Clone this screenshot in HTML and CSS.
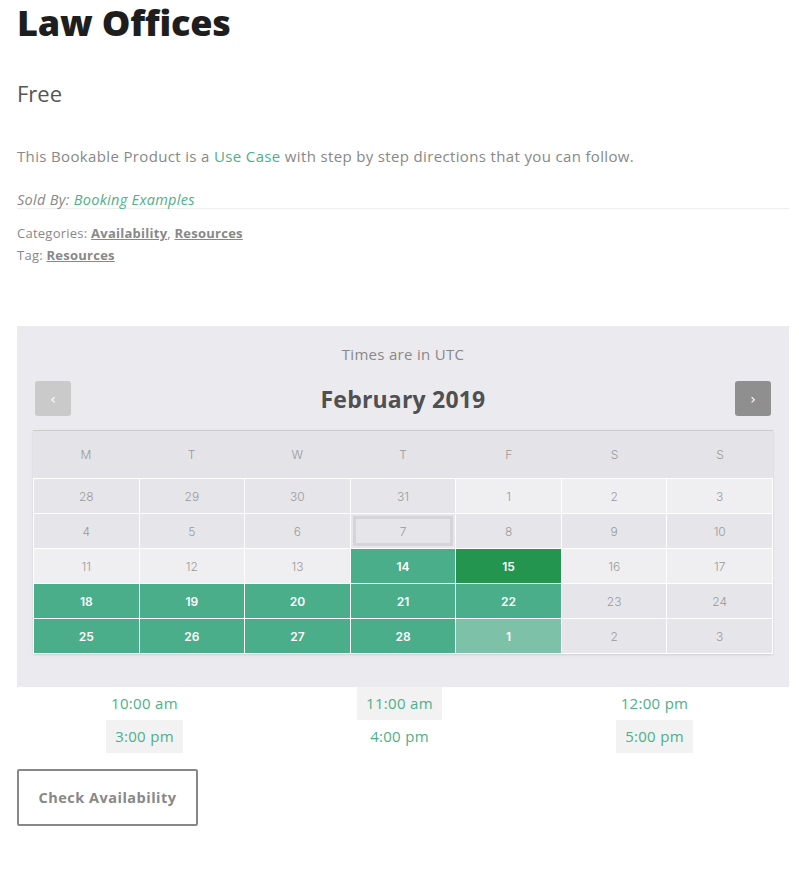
FILE: index.html
```html
<!DOCTYPE html>
<html>
<head>
<meta charset="utf-8">
<link rel="stylesheet" href="styles.css">
</head>
<body>
<div class="page">
  <h1 class="title">Law Offices</h1>
  <p class="price">Free</p>
  <p class="desc">This Bookable Product is a <a href="#">Use Case</a> with step by step directions that you can follow.</p>
  <p class="sold">Sold By: <a href="#">Booking Examples</a></p>
  <div class="meta">
    <div>Categories: <a href="#">Availability</a>, <a href="#">Resources</a></div>
    <div>Tag: <a href="#">Resources</a></div>
  </div>

  <div class="booking">
    <div class="tz">Times are in UTC</div>
    <div class="cal-head">
      <button class="nav prev">&#8249;</button>
      <div class="month">February 2019</div>
      <button class="nav next">&#8250;</button>
    </div>
    <div class="cal">
      <div class="dow">
        <span>M</span><span>T</span><span>W</span><span>T</span><span>F</span><span>S</span><span>S</span>
      </div>
      <div class="days">
        <span class="d">28</span><span class="d">29</span><span class="d">30</span><span class="d">31</span><span class="l">1</span><span class="l">2</span><span class="l">3</span>
        <span class="d">4</span><span class="d">5</span><span class="d">6</span><span class="d today"><i>7</i></span><span class="d">8</span><span class="d">9</span><span class="d">10</span>
        <span class="l">11</span><span class="l">12</span><span class="l">13</span><span class="g">14</span><span class="sel">15</span><span class="l">16</span><span class="l">17</span>
        <span class="g">18</span><span class="g">19</span><span class="g">20</span><span class="g">21</span><span class="g">22</span><span class="d">23</span><span class="d">24</span>
        <span class="g">25</span><span class="g">26</span><span class="g">27</span><span class="g">28</span><span class="pg">1</span><span class="d">2</span><span class="d">3</span>
      </div>
    </div>
  </div>

  <div class="slots">
    <div><a href="#">10:00 am</a></div>
    <div><a href="#" class="hl">11:00 am</a></div>
    <div><a href="#">12:00 pm</a></div>
    <div><a href="#" class="hl">3:00 pm</a></div>
    <div><a href="#">4:00 pm</a></div>
    <div><a href="#" class="hl">5:00 pm</a></div>
  </div>

  <button class="check">Check Availability</button>
</div>
</body>
</html>
```

FILE: styles.css
```css
html, body { margin: 0; padding: 0; background: #fff; }
body { font-family: "Open Sans", "Liberation Sans", sans-serif; color: #888; }
.page { padding: 0 10px 40px 17px; }

.title {
  margin: 0;
  padding-top: 0;
  font-family: "Open Sans", sans-serif;
  font-weight: 800;
  font-size: 36px;
  line-height: 46px;
  color: #1e1e1e;
  letter-spacing: -0.2px;
}
.price {
  margin: 32px 0 0;
  font-size: 22px;
  line-height: 30px;
  color: #555;
  font-weight: 400;
}
.desc {
  margin: 38px 0 0;
  font-size: 15px;
  line-height: 20px;
  letter-spacing: 0.35px;
  color: #888;
}
a { color: #4cb08a; text-decoration: none; }
.sold {
  margin: 26px 0 0;
  font-style: italic;
  font-size: 14.5px;
  line-height: 16px;
  letter-spacing: 0.3px;
  padding-bottom: 0;
  border-bottom: 1px solid #eee;
  color: #888;
}
.meta {
  margin-top: 13px;
  font-size: 13px;
  line-height: 22px;
  letter-spacing: 0.25px;
  color: #888;
}
.meta a { color: #888; font-weight: 700; text-decoration: underline; }

.booking {
  margin-top: 60px;
  background: #ebebef;
  padding: 18px 16px 33px 16px;
}
.tz {
  text-align: center;
  font-size: 15px;
  line-height: 20px;
  letter-spacing: 0.3px;
  color: #888;
}
.cal-head {
  display: flex;
  align-items: center;
  justify-content: space-between;
  margin-top: 17px;
  padding: 0 2px;
}
.nav {
  width: 36px;
  height: 35px;
  border: 0;
  border-radius: 3px;
  color: #fff;
  font-size: 14px;
  padding: 0;
  font-family: "DejaVu Sans", sans-serif;
}
.prev { background: #cacaca; }
.next { background: #8f8f8f; }
.month {
  font-family: "Open Sans", sans-serif;
  font-weight: 700;
  font-size: 23px;
  color: #505050;
  letter-spacing: 0.2px;
}
.cal {
  margin-top: 14px;
  border-top: 1px solid #ccc;
  box-shadow: 0 1px 2px rgba(0,0,0,0.12);
}
.dow {
  display: grid;
  grid-template-columns: repeat(7, 1fr);
  background: #e4e4e8;
  height: 47px;
  align-items: center;
  font-family: "Inter", sans-serif;
  font-weight: 300;
  font-size: 12px;
  color: #999;
  text-align: center;
}
.days {
  display: grid;
  grid-template-columns: repeat(7, 1fr);
  gap: 1px;
  background: #fff;
  border: 1px solid #fff;
}
.days span {
  height: 34px;
  display: flex;
  align-items: center;
  justify-content: center;
  font-family: "Inter", sans-serif;
  font-weight: 300;
  font-size: 12px;
  color: #9a9a9a;
}
.days .d { background: #e6e6ea; }
.days .l { background: #efeff2; }
.days .g { background: #4aae8a; color: #fff; font-weight: 600; }
.days .sel { background: #23954f; color: #fff; font-weight: 600; }
.days .pg { background: #7cc1a8; color: #fff; font-weight: 600; }
.days .today { padding: 2px; box-sizing: border-box; }
.days .today i {
  font-style: normal;
  flex: 1;
  align-self: stretch;
  display: flex;
  align-items: center;
  justify-content: center;
  border: 3px solid #d5d5d9;
}

.slots {
  display: grid;
  grid-template-columns: repeat(3, 1fr);
  text-align: center;
  margin-right: 7px;
}
.slots div { height: 33px; display: flex; justify-content: center; }
.slots a {
  display: block;
  padding: 0 9px;
  line-height: 33px;
  font-size: 15px;
  letter-spacing: 0.3px;
  color: #4cb08a;
}
.slots a.hl { background: #f2f2f2; }

.check {
  margin-top: 16px;
  width: 181px;
  height: 57px;
  background: #fff;
  border: 2px solid #888;
  border-radius: 2px;
  font-family: "Open Sans", sans-serif;
  font-weight: 700;
  font-size: 14.5px;
  color: #888;
  letter-spacing: 0.5px;
}
```
